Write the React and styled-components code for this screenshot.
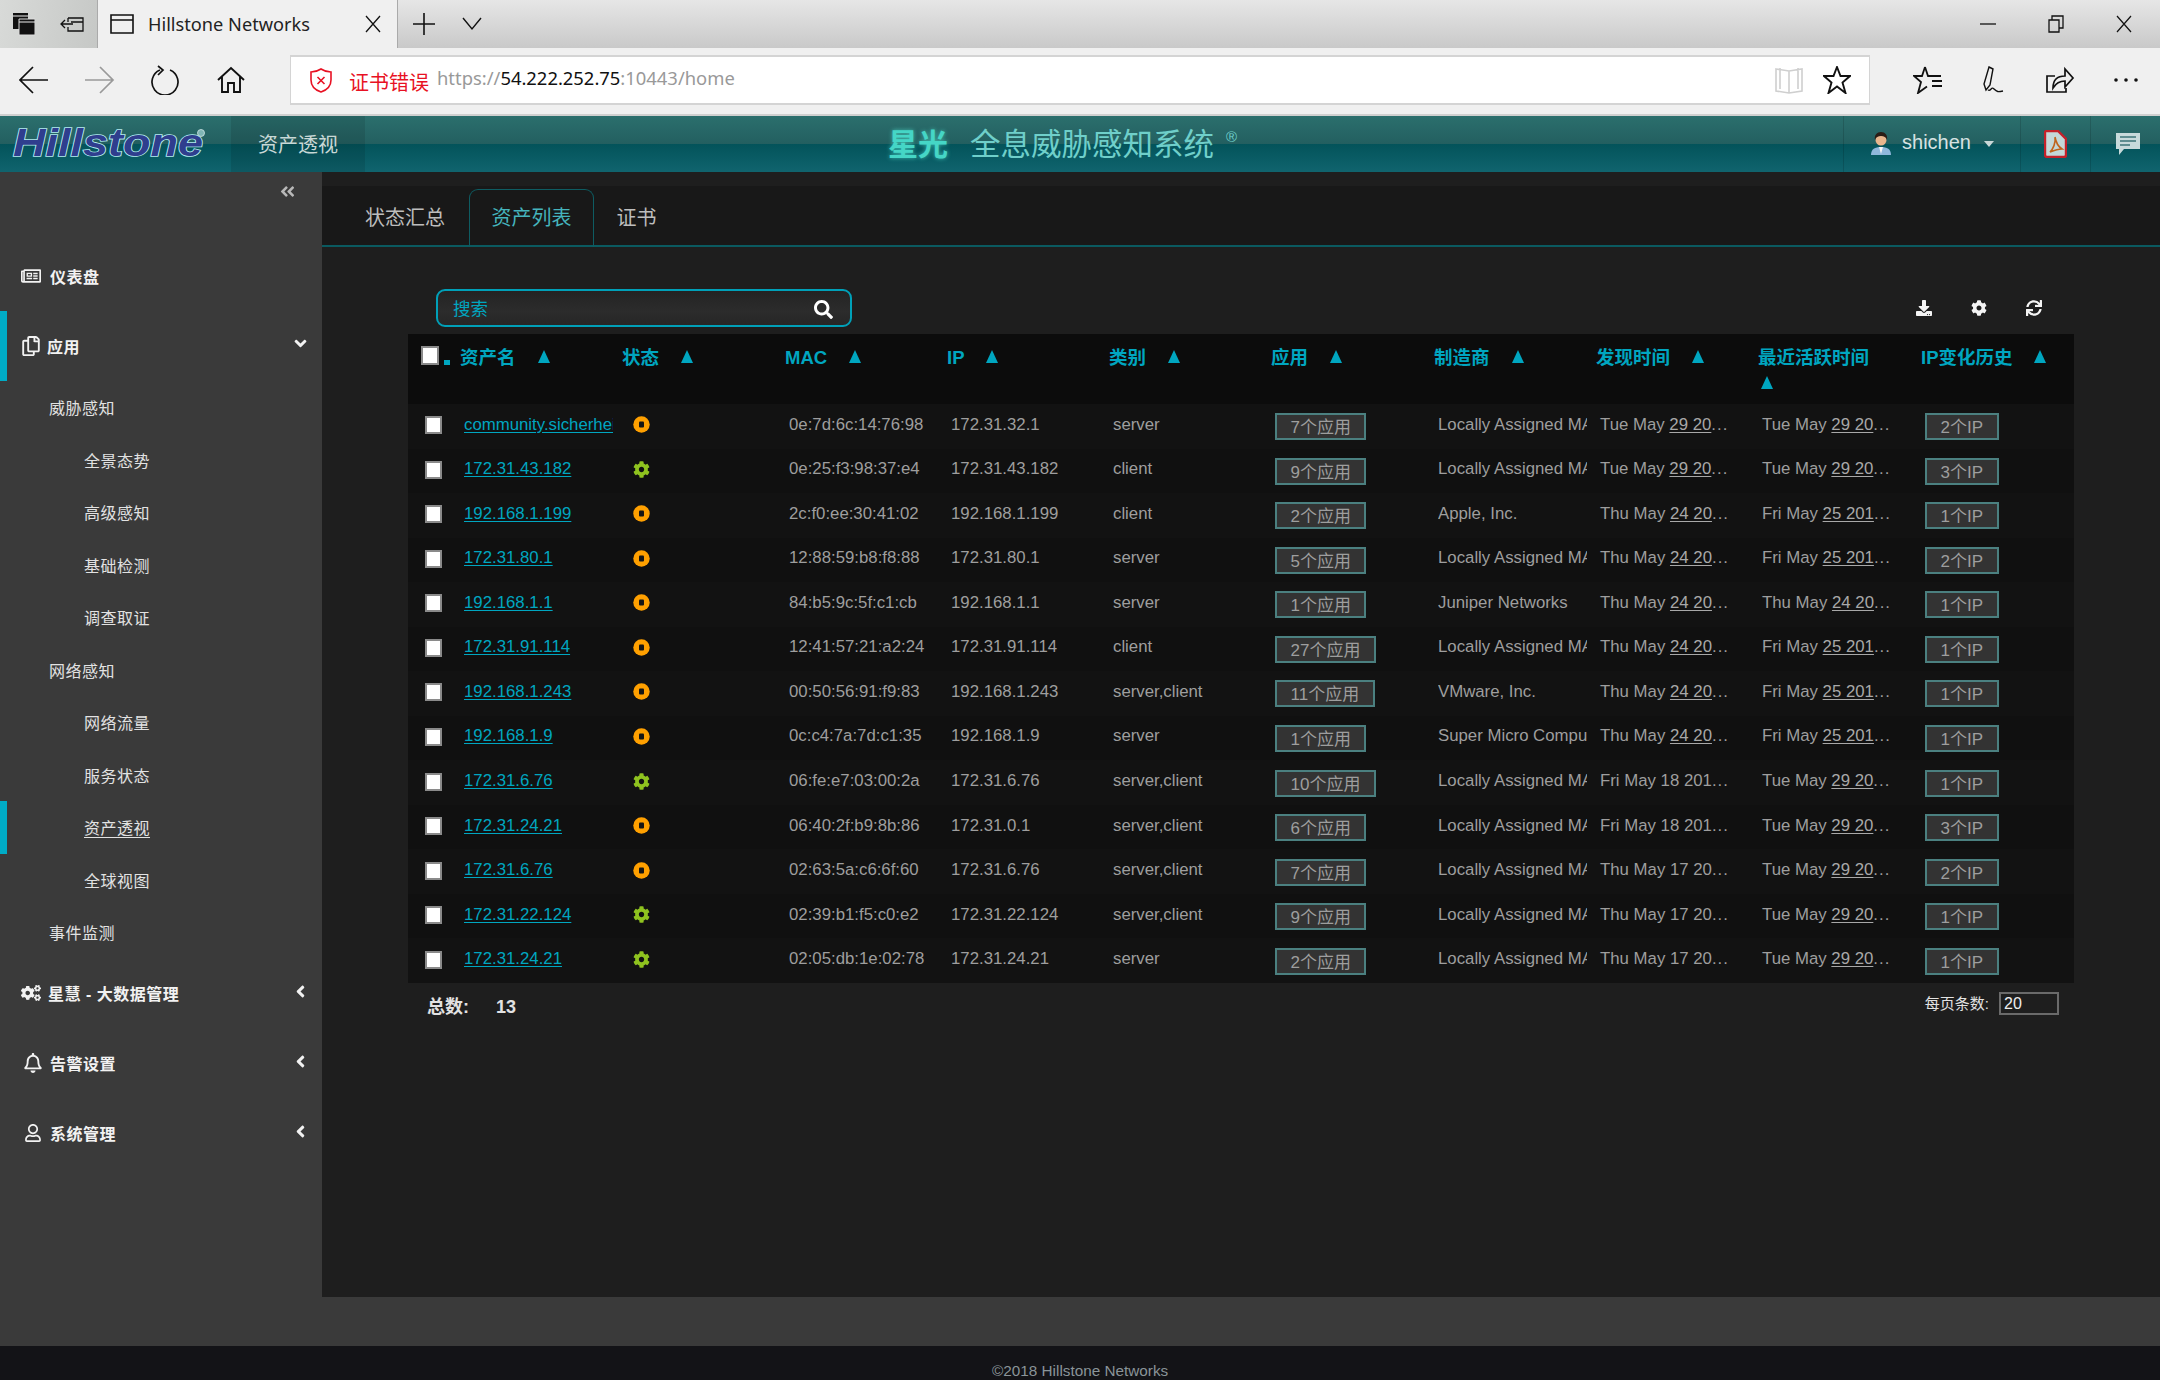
import React from "react";
import styled, { createGlobalStyle } from "styled-components";
import { FaAngleDoubleLeft, FaAngleDown, FaAngleLeft, FaRegNewspaper, FaRegCopy, FaCogs, FaRegBell, FaRegUser, FaSearch, FaDownload, FaCog, FaSync } from "react-icons/fa";

const SANS = `"Liberation Sans", "Noto Sans CJK SC", sans-serif`;
const UI = `"Noto Sans", "Noto Sans CJK SC", sans-serif`;
const TEAL = "#00a6c0";

const Global = createGlobalStyle`
  html, body { margin: 0; padding: 0; background: #131317; }
  * { box-sizing: border-box; }
`;

const Page = styled.div`
  width: 2160px; height: 1380px; overflow: hidden;
  display: flex; flex-direction: column; font-family: ${SANS};
`;

/* browser chrome */
const TitleBar = styled.div`
  height: 48px; display: flex; align-items: center;
  background: linear-gradient(#e6e6e6, #c9c9c9);
`;
const TabTools = styled.div`
  width: 97px; height: 48px; display: flex; align-items: center; gap: 25px; padding-left: 13px;
  background: linear-gradient(100deg, #d8dad8, #c6c8c6);
`;
const BrowserTab = styled.div`
  width: 301px; height: 48px; background: #f0f0f0; border-left: 1px solid #aaa; border-right: 1px solid #aaa;
  display: flex; align-items: center; padding: 0 15px 0 12px;
  font: 18.2px ${UI}; color: #222;
`;
const TabTitle = styled.span` margin-left: 14px; flex: 1; margin-top: -1px; `;
const TabActions = styled.div` display: flex; align-items: center; gap: 27px; margin-left: 15px; `;
const WindowControls = styled.div`
  margin-left: auto; display: flex; align-items: center; gap: 52px; padding-right: 28px;
`;
const NavBar = styled.div`
  height: 68px; background: #f0f0f0; border-bottom: 2px solid #d0d0d0;
  display: flex; align-items: center; padding-left: 19px; padding-bottom: 2px;
`;
const NavGroup = styled.div` display: flex; align-items: center; gap: 36px; `;
const UrlBox = styled.div`
  width: 1580px; height: 50px; margin: 0 43px 0 45px; background: #fff;
  border: 1px solid #d4d4d4; border-top-width: 2px; border-bottom-width: 2px;
  display: flex; align-items: center; padding: 0 18px 0 19px;
  font: 18.4px ${UI};
`;
const CertError = styled.span` color: #e81123; font-size: 20px; margin: 2px 8px 0 17px; `;
const UrlPart = styled.span` color: ${p => p.$dark ? "#111" : "#999"}; margin-top: -5px; `;
const UrlIcons = styled.div` margin-left: auto; display: flex; align-items: center; gap: 19px; `;

/* app header */
const AppHeader = styled.header`
  height: 56px; display: flex; align-items: stretch;
  background: linear-gradient(#2b6f6d 0, #235f60 50%, #03535a 50%, #10646e 100%);
`;
const LogoBox = styled.div` width: 231px; display: flex; align-items: center; padding-left: 12px; `;
const HeadTab = styled.div`
  width: 134px; display: flex; align-items: center; justify-content: center;
  background: rgba(0,0,0,.1); color: #c8d8d6; font-size: 20px; padding-bottom: 2px;
`;
const SystemTitle = styled.div`
  margin-left: 523px; display: flex; align-items: center; font-size: 30.5px; color: #6fcfca; padding-bottom: 5px;
`;
const Glow = styled.b`
  color: #45d6c6; margin-right: 22px; text-shadow: 0 0 4px rgba(80,230,210,.7); font-weight: 700; font-size: 30px;
`;
const Reg = styled.sup` font-size: 15px; margin-left: 12px; position: relative; top: -5px; `;
const HeadRight = styled.div` margin-left: auto; display: flex; `;
const HeadCell = styled.div`
  width: ${p => p.$w}px; border-left: 1px solid rgba(0,0,0,.14);
  display: flex; align-items: center; justify-content: center; gap: ${p => p.$gap || 0}px;
  padding-left: ${p => p.$pl || 0}px;
`;
const UserName = styled.span` color: #d6e2e2; font-size: 20px; margin-bottom: 3px; `;
const Caret = styled.i`
  width: 0; height: 0; border: 5.5px solid transparent; border-top: 6px solid #c8d8d8; border-bottom: 0; margin: 0 0 1px 3px;
`;

/* body */
const Body = styled.div` flex: 1; display: flex; background: #3a3a3a; min-height: 0; `;
const Sidebar = styled.aside` width: 322px; background: #3a3a3a; flex: none; color: #eee; `;
const Collapse = styled.div`
  height: 69px; display: flex; justify-content: flex-end; padding: 11px 26px 0 0; color: #b8b8b8; font-size: 17px;
`;
const MenuRow = styled.div`
  height: 70px; display: flex; align-items: center; padding: 0 12px 1px 21px;
  font-size: 16px; font-weight: 700; letter-spacing: .5px; color: #f2f2f2;
  box-shadow: ${p => p.$active ? `inset 7px 0 0 #00acc6` : "none"};
`;
const MenuIcon = styled.span`
  width: ${p => p.$w || 29}px; flex: none; display: flex; font-size: ${p => p.$size || 20}px; padding-left: ${p => p.$pad || 0}px;
`;
const MenuChevron = styled.span` margin-left: auto; display: flex; font-size: 19px; margin-bottom: 4px; `;
const SubRow = styled.div`
  height: 52.5px; display: flex; align-items: center; font-size: 16px; letter-spacing: .5px; color: #e2e2e2;
  padding-left: ${p => p.$level === 2 ? 84 : 49}px;
  box-shadow: ${p => p.$active ? "inset 7px 0 0 #00acc6" : "none"};
  text-decoration: ${p => p.$active ? "underline" : "none"}; text-underline-offset: 3px;
`;

const Main = styled.main` flex: 1; display: flex; flex-direction: column; min-width: 0; `;
const Content = styled.div` height: 1125px; background: #1e1e1e; padding-top: 14px; flex: none; `;
const Tabs = styled.nav`
  height: 61px; background: #181818; border-bottom: 2px solid #0a5a60;
  display: flex; align-items: flex-end; padding-left: 43px; font-size: 20px;
`;
const TabItem = styled.div`
  height: 58px; margin-bottom: -2px; display: flex; align-items: center; padding: 0 21.5px 4px;
  color: ${p => p.$active ? "#45b4bd" : "#bdbdbd"};
  border: 1px solid ${p => p.$active ? "#0e5c62" : "transparent"}; border-bottom: 0;
  border-radius: 9px 9px 0 0;
  &:first-child { padding-left: 0; padding-right: 24px; padding-bottom: 3px; border: 0; }
`;
const Toolbar = styled.div`
  margin-top: 42px; height: 38px; display: flex; align-items: center; padding-left: 114px; padding-right: 118px;
`;
const SearchBox = styled.div`
  width: 416px; height: 38px; border: 2px solid #00a0b8; border-radius: 9px;
  background: linear-gradient(#232323, #2c2c2c 60%, #262626);
  display: flex; align-items: center; justify-content: space-between; padding: 0 17px 2px 15px;
  color: ${TEAL}; font-size: 17.500px;
`;
const SearchIcon = styled.span` display: flex; color: #fff; font-size: 19px; margin-top: 4px; `;
const ToolIcons = styled.div` margin-left: auto; display: flex; gap: 39px; color: #f4f4f4; font-size: 16px; margin-top: -1px; `;

const Table = styled.table`
  margin: 7px 0 0 86px; width: 1666px; table-layout: fixed; border-collapse: collapse; background: #0c0c0c;
  font-size: 16.8px;
`;
const Th = styled.th`
  height: 70px; padding: 11px 0 0 1px; vertical-align: top; text-align: left; line-height: 25px;
  color: ${TEAL}; font-size: 18.5px; font-weight: 700;
`;
const Arrow = styled.i`
  display: ${p => p.$wrap ? "block" : "inline-block"};
  width: 0; height: 0; border-left: 6.5px solid transparent; border-right: 6.5px solid transparent;
  border-bottom: 13px solid ${TEAL};
  margin: ${p => p.$wrap ? "6px 0 0 3px" : "0 0 1px 22px"};
`;
const Tr = styled.tr` height: 44.54px; background: ${p => p.$odd ? "#121212" : "#101010"}; `;
const Td = styled.td`
  padding: 0 0 3px 5px; color: #9e9e9e; white-space: nowrap; overflow: hidden;
`;
const ClipText = styled.span` display: block; width: 149px; overflow: hidden; `;
const CheckCell = styled.td` padding: 0 0 2px 17px; `;
const Check = styled.input.attrs({ type: "checkbox" })`
  appearance: none; display: block; margin: 0; width: 17px; height: 18px; background: #fff; border: 2px solid #8a8a8a;
`;
const HeadCheckRow = styled.div` display: flex; align-items: flex-end; padding-left: 12px; margin-top: 1px; `;
const HeadCheck = styled(Check)` width: 18px; height: 19px; `;
const TinyMark = styled.span` width: 6px; height: 5px; background: ${TEAL}; margin-left: 5px; `;
const NameLink = styled.a`
  color: ${TEAL}; text-decoration: underline; text-underline-offset: 2px;
`;
const StatusWrap = styled.span` display: flex; width: 17px; margin-left: 7px; color: #8fc31f; font-size: 17px; `;
const PillButton = styled.span`
  display: inline-block; height: 27px; margin: 4px 0 0; padding: 0 13.5px;
  background: #333; border: 2px solid #4b8080; color: #9e9e9e; font-size: 17px; line-height: 26px;
`;
const Under = styled.u` text-underline-offset: 2px; color: #a8a8a8; `;
const Dots = styled.span` letter-spacing: 1px; `;
const TableFoot = styled.div`
  margin: 9px 0 0 86px; width: 1666px; height: 24px; line-height: 24px; display: flex; align-items: flex-start; padding: 0 15px 0 19px; color: #e2e2e2;
`;
const Total = styled.b` font-size: 18px; margin-top: 3px; `;
const TotalNum = styled.b` font-size: 18px; margin: 3px 0 0 27px; `;
const PageSize = styled.div` margin-left: auto; display: flex; align-items: center; font-size: 15px; margin-top: 0; `;
const PageInput = styled.div`
  width: 60px; height: 23px; margin-left: 10px; border: 2px solid #6a6a6a; font-size: 16px; line-height: 19px; padding-left: 3px; color: #eee;
`;
const Footer = styled.footer`
  height: 34px; flex: none; background: #131317; color: #8a9499; font-size: 15.3px; line-height: 50px; padding-left: 992px; white-space: nowrap;
`;

/* drawings */
const Ico = ({ w = 30, h = 30, vb, children, stroke = "#111", sw = 1.6, fill = "none" }) => (
  <svg width={w} height={h} viewBox={vb || `0 0 ${w} ${h}`} fill={fill} stroke={stroke} strokeWidth={sw} style={{ display: "block", flex: "none" }}>{children}</svg>
);

const Logo = () => (
  <svg width="196" height="36" viewBox="0 0 196 36" style={{ display: "block" }}>
    <text x="1" y="30" textLength="190" lengthAdjust="spacingAndGlyphs" fontFamily="Liberation Sans" fontStyle="italic" fontWeight="700" fontSize="38" fill="#2f3e8e" stroke="#b4ecf2" strokeWidth="1.6" paintOrder="stroke">Hillstone</text>
    <circle cx="189" cy="7" r="3.5" fill="#7fb5b5" stroke="#cfe6e6" strokeWidth=".8" />
  </svg>
);

const Avatar = () => (
  <svg width="22" height="24" viewBox="0 0 22 24" style={{ display: "block" }}>
    <path d="M1 23c0-6 4-8 10-8s10 2 10 8z" fill="#8fb8dc" />
    <path d="M9 15h4l-2 7z" fill="#f4f4f4" />
    <circle cx="11" cy="8" r="5.5" fill="#e9b68d" />
    <path d="M5 8c-1-5 2-8 6-8s7 3 6 8c-1-3-3-4-6-4s-5 1-6 4z" fill="#2a1d16" />
  </svg>
);
const PdfIcon = () => (
  <svg width="23" height="28" viewBox="0 0 23 28" style={{ display: "block" }}>
    <path d="M2 1h12l8 8v16a2 2 0 0 1-2 2H3a2 2 0 0 1-2-2V2z" fill="#c4d8d8" stroke="#c4212a" strokeWidth="2.4" />
    <path d="M11 7c1 6-2 12-5 15 5-2 9-3 12-3-3-2-6-6-7-12z" fill="none" stroke="#c0641c" strokeWidth="1.6" />
  </svg>
);
const ChatIcon = () => (
  <svg width="24" height="22" viewBox="0 0 24 22" style={{ display: "block" }}>
    <path d="M0 0h24v16H8l-5 6v-6H0z" fill="#c8dadb" />
    <path d="M4 4h16M4 8h16M4 12h10" stroke="#3d7478" strokeWidth="1.6" />
  </svg>
);
const OrangeStatus = () => (
  <svg width="17" height="17" viewBox="0 0 17 17" style={{ display: "block" }}>
    <circle cx="8.5" cy="8.5" r="8.2" fill="#ffa000" />
    <rect x="6" y="5.5" width="5" height="6" rx="1" fill="#151515" />
  </svg>
);

const Data = (() => {
  const LA = "Locally Assigned MAC";
  const T29 = ["Tue May", "29 20", true], T24 = ["Thu May", "24 20", true], F25 = ["Fri May", "25 201", true];
  const F18 = ["Fri May 18 201", "", false], T17 = ["Thu May 17 20", "", false];
  return [
    ["community.sicherheit", "o", "0e:7d:6c:14:76:98", "172.31.32.1", "server", 7, LA, T29, T29, 2],
    ["172.31.43.182", "g", "0e:25:f3:98:37:e4", "172.31.43.182", "client", 9, LA, T29, T29, 3],
    ["192.168.1.199", "o", "2c:f0:ee:30:41:02", "192.168.1.199", "client", 2, "Apple, Inc.", T24, F25, 1],
    ["172.31.80.1", "o", "12:88:59:b8:f8:88", "172.31.80.1", "server", 5, LA, T24, F25, 2],
    ["192.168.1.1", "o", "84:b5:9c:5f:c1:cb", "192.168.1.1", "server", 1, "Juniper Networks", T24, T24, 1],
    ["172.31.91.114", "o", "12:41:57:21:a2:24", "172.31.91.114", "client", 27, LA, T24, F25, 1],
    ["192.168.1.243", "o", "00:50:56:91:f9:83", "192.168.1.243", "server,client", 11, "VMware, Inc.", T24, F25, 1],
    ["192.168.1.9", "o", "0c:c4:7a:7d:c1:35", "192.168.1.9", "server", 1, "Super Micro Computer", T24, F25, 1],
    ["172.31.6.76", "g", "06:fe:e7:03:00:2a", "172.31.6.76", "server,client", 10, LA, F18, T29, 1],
    ["172.31.24.21", "o", "06:40:2f:b9:8b:86", "172.31.0.1", "server,client", 6, LA, F18, T29, 3],
    ["172.31.6.76", "o", "02:63:5a:c6:6f:60", "172.31.6.76", "server,client", 7, LA, T17, T29, 2],
    ["172.31.22.124", "g", "02:39:b1:f5:c0:e2", "172.31.22.124", "server,client", 9, LA, T17, T29, 1],
    ["172.31.24.21", "g", "02:05:db:1e:02:78", "172.31.24.21", "server", 2, LA, T17, T29, 1],
  ];
})();

const widths = [51, 162, 163, 162, 162, 162, 163, 162, 162, 163, 154];
const heads = ["资产名", "状态", "MAC", "IP", "类别", "应用", "制造商", "发现时间", "最近活跃时间", "IP变化历史"];
const subs = [
  ["威胁感知", 1], ["全景态势", 2], ["高级感知", 2], ["基础检测", 2], ["调查取证", 2],
  ["网络感知", 1], ["网络流量", 2], ["服务状态", 2], ["资产透视", 2, true], ["全球视图", 2], ["事件监测", 1],
];

const DateText = ({ v }) => (
  <>{v[0]}{v[2] ? <> <Under>{v[1]}</Under></> : null}<Dots>...</Dots></>
);

export default function App() {
  return (
    <Page>
      <Global />
      <TitleBar>
        <TabTools>
          <Ico w={22} h={24} stroke="none" fill="#111"><path d="M0 1h15v16H0z" /><path d="M6 7h16v16H6z" stroke="#ddd" strokeWidth="1" /><path d="M0 4h15M6 10h16" stroke="#eee" strokeWidth="1" /></Ico>
          <Ico w={25} h={20} sw={1.3}><path d="M8 4h15v13H8v-4M8 8V4M11 8h12M1 10h12M5 6l-4 4 4 4" /></Ico>
        </TabTools>
        <BrowserTab>
          <Ico w={24} h={20} sw={1.6}><path d="M1 1h22v18H1zM1 6h22" /></Ico>
          <TabTitle>Hillstone Networks</TabTitle>
          <Ico w={18} h={18} sw={1.3}><path d="M2 1l14 16M16 1L2 17" /></Ico>
        </BrowserTab>
        <TabActions>
          <Ico w={22} h={24} sw={1.6}><path d="M11 1v22M0 12h22" /></Ico>
          <Ico w={20} h={14} sw={1.4}><path d="M1 1l9 11 9-11" /></Ico>
        </TabActions>
        <WindowControls>
          <Ico w={16} h={4} sw={1.3}><path d="M0 2h16" /></Ico>
          <Ico w={16} h={18} sw={1.3}><path d="M1 5h10v12H1zM4 5V1h11v12h-4" /></Ico>
          <Ico w={16} h={18} sw={1.2}><path d="M1 1l14 16M15 1L1 17" /></Ico>
        </WindowControls>
      </TitleBar>

      <NavBar>
        <NavGroup>
          <Ico h={28} sw={1.7}><path d="M1 14h28M14 1L1 14l13 13" /></Ico>
          <Ico h={28} sw={1.7} stroke="#999"><path d="M0 14h28M15 1l13 13-13 13" /></Ico>
          <Ico h={30} sw={1.7}><path d="M9 5a13 13 0 1 0 10 0M7 1l5 4-5 5" /></Ico>
          <Ico w={28} h={28} sw={1.9}><path d="M1 14L14 2l13 12M5 11v15h6v-9h6v9h6V11" /></Ico>
        </NavGroup>
        <UrlBox>
          <Ico w={22} h={25} stroke="#e81123" sw={1.6}><path d="M11 1c3 2 6 3 10 3v8c0 6-4 10-10 12C5 22 1 18 1 12V4c4 0 7-1 10-3zM7.5 9l7 7M14.5 9l-7 7" /></Ico>
          <CertError>证书错误</CertError>
          <UrlPart>https://</UrlPart><UrlPart $dark>54.222.252.75</UrlPart><UrlPart>:10443/home</UrlPart>
          <UrlIcons>
            <Ico w={30} h={28} stroke="#cfcfcf" sw={1.6}><path d="M2 3l13 2 13-2v22l-13 2-13-2zM15 5v22M6 2v21M24 2v21" /></Ico>
            <Ico w={28} h={28} sw={1.9}><path d="M14 1l3.5 9H27l-7.5 6.500L22.500 27 14 20.500 5.500 27l3-10.500L1 10h9.500z" /></Ico>
          </UrlIcons>
        </UrlBox>
        <NavGroup>
          <Ico h={28} sw={1.8}><path d="M12 1l3 9h13M12 1L9 10H1l7 6-3 11 9-6.500M19 15h10M19 20h10" /></Ico>
          <Ico h={28} sw={1.4}><path d="M10 1l4 2-3 16-4 5-2-6zM9 24c3 2 3-4 6-1s4 3 9 2" /></Ico>
          <Ico h={28} sw={1.7}><path d="M21 22v4H2V10h8M8 22c0-8 4-12 12-12V3l8 9-8 9v-6c-5 0-9 2-12 7z" /></Ico>
          <Ico h={28} stroke="none" fill="#111"><circle cx="5" cy="14" r="1.800" /><circle cx="15" cy="14" r="1.800" /><circle cx="25" cy="14" r="1.800" /></Ico>
        </NavGroup>
      </NavBar>

      <AppHeader>
        <LogoBox><Logo /></LogoBox>
        <HeadTab>资产透视</HeadTab>
        <SystemTitle><Glow>星光</Glow>全息威胁感知系统<Reg>®</Reg></SystemTitle>
        <HeadRight>
          <HeadCell $w={177} $gap={10}><Avatar /><UserName>shichen</UserName><Caret /></HeadCell>
          <HeadCell $w={70}><PdfIcon /></HeadCell>
          <HeadCell $w={70} $pl={4}><ChatIcon /></HeadCell>
        </HeadRight>
      </AppHeader>

      <Body>
        <Sidebar>
          <Collapse><FaAngleDoubleLeft /></Collapse>
          <MenuRow><MenuIcon><FaRegNewspaper /></MenuIcon>仪表盘</MenuRow>
          <MenuRow $active><MenuIcon $w={26}><FaRegCopy /></MenuIcon>应用<MenuChevron><FaAngleDown /></MenuChevron></MenuRow>
          {subs.map(([t, l, a]) => <SubRow key={t} $level={l} $active={a}>{t}</SubRow>)}
          <MenuRow><MenuIcon $w={27}><FaCogs /></MenuIcon>星慧 - 大数据管理<MenuChevron><FaAngleLeft /></MenuChevron></MenuRow>
          <MenuRow><MenuIcon $pad={2}><FaRegBell /></MenuIcon>告警设置<MenuChevron><FaAngleLeft /></MenuChevron></MenuRow>
          <MenuRow><MenuIcon $pad={3} $size={18}><FaRegUser /></MenuIcon>系统管理<MenuChevron><FaAngleLeft /></MenuChevron></MenuRow>
        </Sidebar>
        <Main>
          <Content>
            <Tabs>
              <TabItem>状态汇总</TabItem>
              <TabItem $active>资产列表</TabItem>
              <TabItem>证书</TabItem>
            </Tabs>
            <Toolbar>
              <SearchBox>搜索<SearchIcon><FaSearch /></SearchIcon></SearchBox>
              <ToolIcons><FaDownload /><FaCog /><FaSync /></ToolIcons>
            </Toolbar>
            <Table>
              <colgroup>{widths.map((w, i) => <col key={i} style={{ width: w }} />)}</colgroup>
              <thead>
                <tr>
                  <Th><HeadCheckRow><HeadCheck /><TinyMark /></HeadCheckRow></Th>
                  {heads.map((h, i) => <Th key={h}>{h}<Arrow $wrap={i === 8} /></Th>)}
                </tr>
              </thead>
              <tbody>
                {Data.map((r, i) => (
                  <Tr key={i} $odd={i % 2 === 0}>
                    <CheckCell><Check /></CheckCell>
                    <Td><ClipText><NameLink>{r[0]}</NameLink></ClipText></Td>
                    <Td><StatusWrap>{r[1] === "g" ? <FaCog /> : <OrangeStatus />}</StatusWrap></Td>
                    <Td>{r[2]}</Td>
                    <Td>{r[3]}</Td>
                    <Td>{r[4]}</Td>
                    <Td><PillButton>{r[5]}个应用</PillButton></Td>
                    <Td><ClipText>{r[6]}</ClipText></Td>
                    <Td><DateText v={r[7]} /></Td>
                    <Td><DateText v={r[8]} /></Td>
                    <Td><PillButton>{r[9]}个IP</PillButton></Td>
                  </Tr>
                ))}
              </tbody>
            </Table>
            <TableFoot>
              <Total>总数:</Total><TotalNum>13</TotalNum>
              <PageSize>每页条数:<PageInput>20</PageInput></PageSize>
            </TableFoot>
          </Content>
        </Main>
      </Body>
      <Footer>©2018 Hillstone Networks</Footer>
    </Page>
  );
}
